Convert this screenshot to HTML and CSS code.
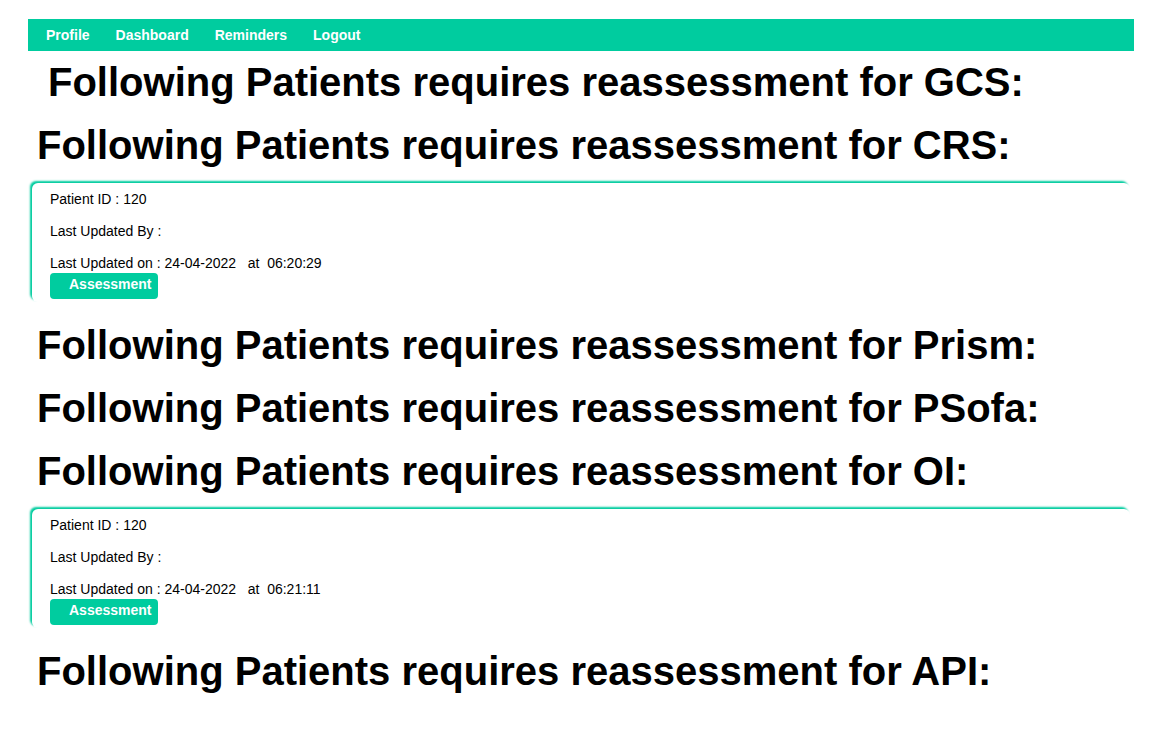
FILE: index.html
```html
<!DOCTYPE html>
<html>
<head>
<meta charset="utf-8">
<link rel="stylesheet" href="styles.css">
</head>
<body>
<nav class="topnav">
  <a href="#">Profile</a>
  <a href="#">Dashboard</a>
  <a href="#">Reminders</a>
  <a href="#">Logout</a>
</nav>
<main class="content">
  <h1 class="title first">Following Patients requires reassessment for GCS:</h1>
  <h1 class="title">Following Patients requires reassessment for CRS:</h1>
  <div class="card">
    <div class="row">Patient ID : 120</div>
    <div class="row">Last Updated By :</div>
    <div class="row last">Last Updated on : 24-04-2022 &nbsp; at &nbsp;06:20:29</div>
    <button class="btn">Assessment</button>
  </div>
  <h1 class="title">Following Patients requires reassessment for Prism:</h1>
  <h1 class="title">Following Patients requires reassessment for PSofa:</h1>
  <h1 class="title">Following Patients requires reassessment for OI:</h1>
  <div class="card">
    <div class="row">Patient ID : 120</div>
    <div class="row">Last Updated By :</div>
    <div class="row last">Last Updated on : 24-04-2022 &nbsp; at &nbsp;06:21:11</div>
    <button class="btn">Assessment</button>
  </div>
  <h1 class="title">Following Patients requires reassessment for API:</h1>
</main>
</body>
</html>
```
FILE: styles.css
```css
html, body {
  margin: 0;
  padding: 0;
  background: #ffffff;
}
body {
  padding: 8px;
  font-family: "Liberation Sans", Arial, sans-serif;
  color: #000;
}
.topnav {
  display: flex;
  align-items: center;
  height: 32px;
  margin: 11px 22px 0 20px;
  padding-left: 5px;
  background: #00cc9f;
}
.topnav a {
  color: #fff;
  text-decoration: none;
  font-weight: bold;
  font-size: 14px;
  line-height: 32px;
  padding: 0 13px;
}
.content {
  display: flex;
  flex-direction: column;
  align-items: stretch;
}
.title {
  margin: 0 0 0 29px;
  font-size: 40px;
  font-weight: bold;
  line-height: 46px;
}
.title.first {
  margin-left: 40px;
  margin-top: 8px;
}
.title + .title {
  margin-top: 17px;
}
.title + .card {
  margin-top: 15px;
}
.card + .title {
  margin-top: 20px;
}
.card {
  margin: 0 26px 0 24px;
  padding: 8px 20px 3px 18px;
  border-radius: 6px;
  box-shadow: -2px -2px 2px #00cc9f;
  display: flex;
  flex-direction: column;
  align-items: flex-start;
}
.row {
  font-size: 14px;
  line-height: 16px;
  margin-bottom: 16px;
}
.row.last {
  margin-bottom: 2px;
}
.btn {
  height: 26px;
  padding: 0 8px 4px 19px;
  border: none;
  border-radius: 4px;
  background: #00cc9f;
  color: #fff;
  font-family: "Liberation Sans", Arial, sans-serif;
  font-weight: bold;
  font-size: 14px;
  width: 108px;
  text-align: left;
}
```
